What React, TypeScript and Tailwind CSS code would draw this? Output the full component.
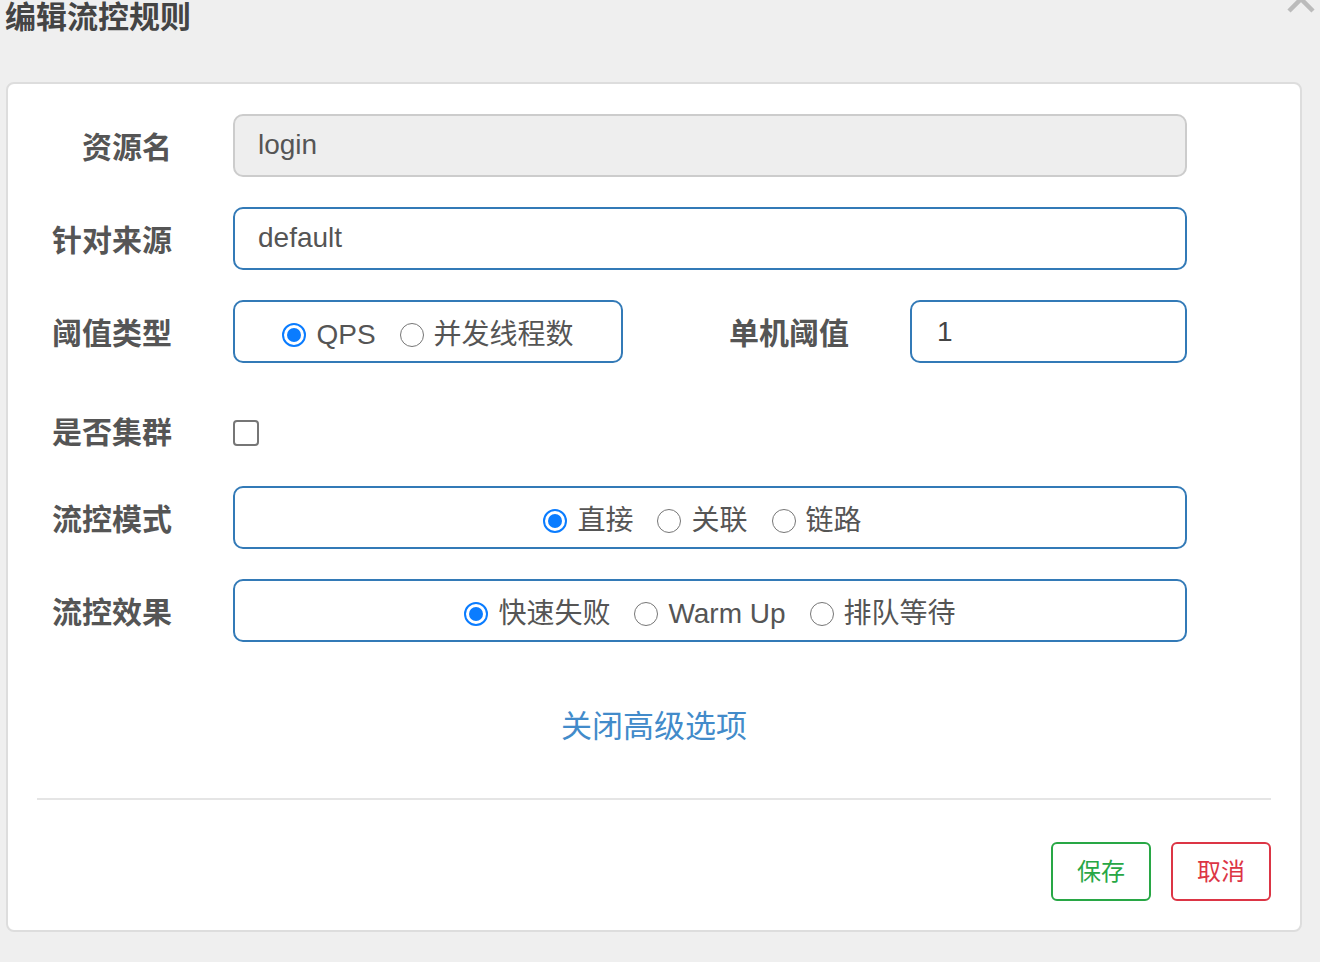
const font = { fontFamily: '"Liberation Sans", "Noto Sans CJK SC", sans-serif' };

function Radio({ label, checked }: { label: string; checked?: boolean }) {
  return (
    <label className="flex items-center gap-[10px]">
      {checked ? (
        <span className="w-[24px] h-[24px] rounded-full border-[2px] border-[#0a7cff] flex items-center justify-center">
          <span className="w-[14px] h-[14px] rounded-full bg-[#0a7cff]" />
        </span>
      ) : (
        <span className="w-[24px] h-[24px] rounded-full border-[1.5px] border-[#767676] bg-white" />
      )}
      <span className="text-[28px] text-[#555] leading-none">{label}</span>
    </label>
  );
}

function Row({ label, children }: { label: string; children: React.ReactNode }) {
  return (
    <div className="flex items-center h-[63px]">
      <div className="w-[164px] pt-[5px] text-right text-[30px] font-bold text-[#555] leading-none shrink-0">
        {label}
      </div>
      <div className="ml-[61px] flex-1 flex items-center h-full">{children}</div>
    </div>
  );
}

export default function App() {
  return (
    <div className="w-[1320px] h-[962px] bg-[#efefef] relative overflow-hidden" style={font}>
      <div className="absolute right-[4px] top-[-16px] w-[30px] h-[30px]">
        <svg width="30" height="30" viewBox="0 0 30 30" fill="none" stroke="#bbb" strokeWidth="4.5">
          <path d="M3 3 L27 27 M27 3 L3 27" />
        </svg>
      </div>
      <div className="h-[82px] pl-[5px]">
        <h1 className="text-[31px] font-bold text-[#444] leading-[36px]">编辑流控规则</h1>
      </div>
      <div className="ml-[6px] w-[1296px] h-[850px] bg-white border-[2px] border-[#ddd] rounded-[8px] pt-[30px] flex flex-col">
        <div className="flex flex-col gap-[30px] pr-[113px]">
          <Row label="资源名">
            <div className="w-full h-full rounded-[10px] border-[2px] border-[#ccc] bg-[#eee] flex items-center pl-[23px] pb-[2px] text-[28px] text-[#555]">
              login
            </div>
          </Row>
          <Row label="针对来源">
            <div className="w-full h-full rounded-[10px] border-[2px] border-[#337ab7] bg-white flex items-center pl-[23px] pb-[2px] text-[28px] text-[#555]">
              default
            </div>
          </Row>
          <Row label="阈值类型">
            <div className="w-[390px] h-full rounded-[10px] border-[2px] border-[#337ab7] flex items-center justify-center gap-[24px] pt-[6px]">
              <Radio label="QPS" checked />
              <Radio label="并发线程数" />
            </div>
            <div className="w-[226px] pt-[5px] text-right text-[30px] font-bold text-[#555] leading-none">单机阈值</div>
            <div className="ml-[61px] flex-1 h-full rounded-[10px] border-[2px] border-[#337ab7] flex items-center pl-[25px] text-[28px] text-[#444]">
              1
            </div>
          </Row>
          <div className="flex items-center h-[63px] pt-[16px]">
            <div className="w-[164px] text-right text-[30px] font-bold text-[#555] leading-none shrink-0">是否集群</div>
            <div className="ml-[61px] flex items-center">
              <span className="w-[26px] h-[26px] rounded-[4px] border-[2px] border-[#767676] bg-white" />
            </div>
          </div>
          <Row label="流控模式">
            <div className="w-full h-full rounded-[10px] border-[2px] border-[#337ab7] flex items-center justify-center gap-[24px] pt-[6px] pr-[15px]">
              <Radio label="直接" checked />
              <Radio label="关联" />
              <Radio label="链路" />
            </div>
          </Row>
          <Row label="流控效果">
            <div className="w-full h-full rounded-[10px] border-[2px] border-[#337ab7] flex items-center justify-center gap-[24px] pt-[6px]">
              <Radio label="快速失败" checked />
              <Radio label="Warm Up" />
              <Radio label="排队等待" />
            </div>
          </Row>
        </div>
        <div className="mt-[65px] text-center">
          <a className="text-[31px] text-[#428bca] leading-[40px]">关闭高级选项</a>
        </div>
        <div className="mt-[51px] mx-[29px] border-t-[2px] border-[#e5e5e5]" />
        <div className="mt-[42px] mr-[29px] flex justify-end gap-[20px]">
          <button className="w-[100px] h-[59px] rounded-[6px] border-[2px] border-[#28a745] text-[#28a745] text-[24px] bg-white">
            保存
          </button>
          <button className="w-[100px] h-[59px] rounded-[6px] border-[2px] border-[#dc3545] text-[#dc3545] text-[24px] bg-white">
            取消
          </button>
        </div>
      </div>
    </div>
  );
}
